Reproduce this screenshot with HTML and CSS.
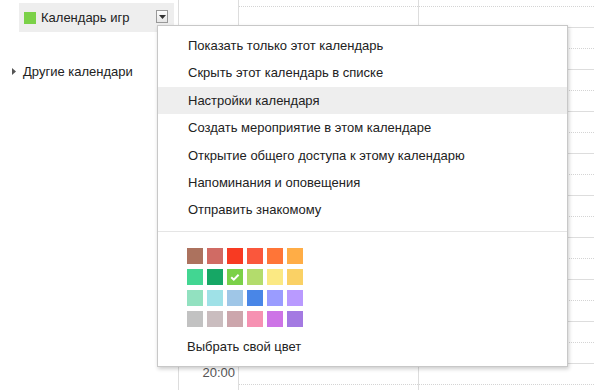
FILE: index.html
```html
<!DOCTYPE html>
<html lang="ru">
<head>
<meta charset="utf-8">
<title>Календарь игр</title>
<link rel="stylesheet" href="styles.css">
</head>
<body>
<div class="app">
  <aside class="sidebar">
    <div class="cal-item">
      <span class="cal-color"></span>
      <span class="cal-name">Календарь игр</span>
      <span class="cal-drop"><svg width="7" height="4" viewBox="0 0 7 4"><path d="M0 0h7L3.5 4z" fill="#333"/></svg></span>
    </div>
    <div class="other">
      <svg class="tri" width="4" height="7" viewBox="0 0 4 7"><path d="M0 0v7l4-3.5z" fill="#555"/></svg>
      <span>Другие календари</span>
    </div>
  </aside>
  <main class="grid">
    <div class="gutter">
      <div class="rows">
        <div class="label"></div>
        <div class="label"></div>
        <div class="label"></div>
        <div class="label"></div>
        <div class="label"></div>
        <div class="label"></div>
        <div class="label"></div>
        <div class="label"></div>
        <div class="label"></div>
        <div class="label">20:00</div>
      </div>
    </div>
    <div class="day">
      <div class="rows">
        <div class="hour"></div><div class="hour"></div><div class="hour"></div><div class="hour"></div><div class="hour"></div>
        <div class="hour"></div><div class="hour"></div><div class="hour"></div><div class="hour"></div><div class="hour"></div>
      </div>
    </div>
    <div class="day">
      <div class="rows">
        <div class="hour"></div><div class="hour"></div><div class="hour"></div><div class="hour"></div><div class="hour"></div>
        <div class="hour"></div><div class="hour"></div><div class="hour"></div><div class="hour"></div><div class="hour"></div>
      </div>
    </div>
  </main>

  <div class="menu">
    <ul class="items">
      <li>Показать только этот календарь</li>
      <li>Скрыть этот календарь в списке</li>
      <li class="active">Настройки календаря</li>
      <li>Создать мероприятие в этом календаре</li>
      <li>Открытие общего доступа к этому календарю</li>
      <li>Напоминания и оповещения</li>
      <li>Отправить знакомому</li>
    </ul>
    <div class="sep"></div>
    <div class="palette">
      <span class="sw" style="background:#ac725e"></span>
      <span class="sw" style="background:#d06b64"></span>
      <span class="sw" style="background:#f83a22"></span>
      <span class="sw" style="background:#fa573c"></span>
      <span class="sw" style="background:#ff7537"></span>
      <span class="sw" style="background:#ffad46"></span>
      <span class="sw" style="background:#42d692"></span>
      <span class="sw" style="background:#16a765"></span>
      <span class="sw" style="background:#7bd148"><svg width="16" height="16" viewBox="0 0 16 16"><path d="M4.2 8.2l2.6 2.5 4.8-5" fill="none" stroke="#fff" stroke-width="2"/></svg></span>
      <span class="sw" style="background:#b3dc6c"></span>
      <span class="sw" style="background:#fbe983"></span>
      <span class="sw" style="background:#fad165"></span>
      <span class="sw" style="background:#92e1c0"></span>
      <span class="sw" style="background:#9fe1e7"></span>
      <span class="sw" style="background:#9fc6e7"></span>
      <span class="sw" style="background:#4986e7"></span>
      <span class="sw" style="background:#9a9cff"></span>
      <span class="sw" style="background:#b99aff"></span>
      <span class="sw" style="background:#c2c2c2"></span>
      <span class="sw" style="background:#cabdbf"></span>
      <span class="sw" style="background:#cca6ac"></span>
      <span class="sw" style="background:#f691b2"></span>
      <span class="sw" style="background:#cd74e6"></span>
      <span class="sw" style="background:#a47ae2"></span>
    </div>
    <div class="custom">Выбрать свой цвет</div>
  </div>
</div>
</body>
</html>
```

FILE: styles.css
```css
html, body {
  margin: 0;
  padding: 0;
  background: #fff;
}
body {
  font-family: "Liberation Sans", Arial, sans-serif;
  font-size: 13px;
  color: #222;
}
.app {
  position: relative;
  display: flex;
  width: 594px;
  height: 390px;
  overflow: hidden;
}
.sidebar {
  width: 178px;
  flex: none;
  padding-top: 3px;
  box-sizing: border-box;
}
.cal-item {
  margin-left: 19px;
  width: 155px;
  height: 29px;
  background: #eeeeee;
  display: flex;
  align-items: center;
  padding-left: 5px;
  box-sizing: border-box;
}
.cal-color {
  width: 12px;
  height: 12px;
  background: #7bd148;
  margin-right: 5px;
  flex: none;
}
.cal-name {
  color: #222;
  margin-top: -1px;
}
.cal-drop {
  margin-left: auto;
  margin-right: 6px;
  width: 10px;
  height: 11px;
  border: 1px solid #999;
  background: linear-gradient(#fdfdfd, #e6e6e6);
  display: flex;
  align-items: center;
  justify-content: center;
  margin-top: -2px;
}
.other {
  margin-top: 30px;
  display: flex;
  align-items: center;
  padding-left: 12px;
  height: 18px;
}
.tri {
  margin-right: 7px;
}
.grid {
  flex: none;
  display: flex;
  height: 390px;
}
.gutter {
  width: 59px;
  border-left: 1px solid #dddddd;
}
.day {
  width: 179px;
  border-left: 1px solid #dddddd;
  flex: none;
}
.rows {
  margin-top: -15px;
}
.label {
  height: 42px;
  box-sizing: border-box;
  text-align: right;
  padding-right: 3px;
  padding-top: 2px;
  color: #555;
  font-size: 13px;
  line-height: 15px;
}
.hour {
  height: 42px;
  box-sizing: border-box;
  border-top: 1px solid #dddddd;
}
.hour::after {
  content: "";
  display: block;
  margin-top: 20px;
  border-top: 1px dotted #d4d4d4;
}
.menu {
  position: absolute;
  left: 157px;
  top: 25px;
  width: 411px;
  height: 342px;
  box-sizing: border-box;
  border: 1px solid #c8c8c8;
  background: #fff;
  box-shadow: 1px 2px 4px rgba(0, 0, 0, 0.2);
  padding-top: 6px;
}
.items {
  list-style: none;
  margin: 0;
  padding: 0;
}
.items li {
  height: 27.4px;
  line-height: 27px;
  padding-left: 30px;
  color: #222;
  white-space: nowrap;
}
.items li.active {
  background: #eeeeee;
}
.sep {
  margin-top: 7px;
  border-top: 1px solid #e5e5e5;
}
.palette {
  display: grid;
  grid-template-columns: repeat(6, 16px);
  grid-auto-rows: 16px;
  column-gap: 4px;
  row-gap: 5px;
  padding-left: 29px;
  margin-top: 16px;
}
.sw {
  display: block;
  width: 16px;
  height: 16px;
}
.sw svg {
  display: block;
}
.custom {
  padding-left: 29px;
  margin-top: 12px;
  line-height: 16px;
  color: #222;
}
```
